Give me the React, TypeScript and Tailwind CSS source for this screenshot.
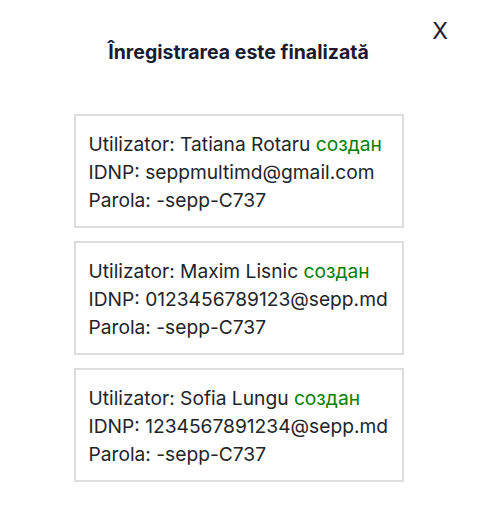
import React from "react";

const users = [
  { name: "Tatiana Rotaru", idnp: "seppmultimd@gmail.com", pass: "-sepp-C737" },
  { name: "Maxim Lisnic", idnp: "0123456789123@sepp.md", pass: "-sepp-C737" },
  { name: "Sofia Lungu", idnp: "1234567891234@sepp.md", pass: "-sepp-C737" },
];

export default function App() {
  return (
    <div
      className="relative w-[477px] h-[513px] bg-white text-[#212529]"
      style={{ fontFamily: "Inter, 'Noto Sans', sans-serif" }}
    >
      <button className="absolute right-[29px] top-[17px] text-[23px] leading-[28px] text-[#1b1b2f]">
        X
      </button>
      <div className="flex flex-col items-center pt-[40px]">
        <h2 className="text-[19.5px] leading-[24px] font-bold text-[#1b1b2f]">
          Înregistrarea este finalizată
        </h2>
        <div className="mt-[50px] flex flex-col gap-[13px]">
          {users.map((u) => (
            <div
              key={u.idnp}
              className="w-[330px] border-2 border-[#dddddd] pl-[13px] pr-[4px] pt-[14px] pb-[12px] text-[19.2px] leading-[28px]"
            >
              <div className="whitespace-nowrap">
                Utilizator: {u.name} <span className="text-[#008000]">создан</span>
              </div>
              <div className="whitespace-nowrap">IDNP: {u.idnp}</div>
              <div className="whitespace-nowrap">Parola: {u.pass}</div>
            </div>
          ))}
        </div>
      </div>
    </div>
  );
}
